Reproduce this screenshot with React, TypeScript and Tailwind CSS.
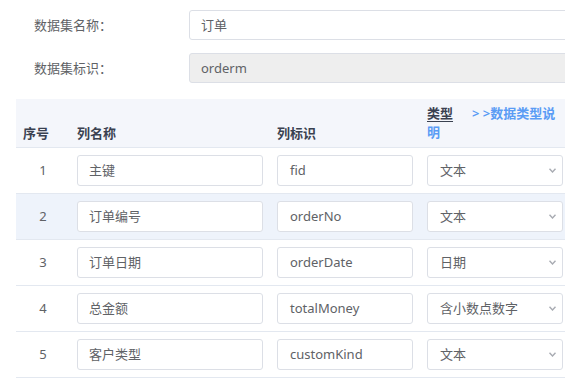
import React from 'react';

type Column = {
  name: string;
  key: string;
  type: string;
};

const columns: Column[] = [
  { name: '主键', key: 'fid', type: '文本' },
  { name: '订单编号', key: 'orderNo', type: '文本' },
  { name: '订单日期', key: 'orderDate', type: '日期' },
  { name: '总金额', key: 'totalMoney', type: '含小数点数字' },
  { name: '客户类型', key: 'customKind', type: '文本' },
];

const font = { fontFamily: '"Noto Sans", "Noto Sans CJK SC", sans-serif' };

function Chevron() {
  return (
    <svg width="7" height="5" viewBox="0 0 7 5" className="shrink-0">
      <path d="M0.5 0.8 L3.5 4 L6.5 0.8" fill="none" stroke="#a8abb2" strokeWidth="1.4" />
    </svg>
  );
}

export default function App() {
  return (
    <div className="w-[565px] h-[378px] overflow-hidden bg-white text-[13px] leading-[18px]" style={font}>
      {/* dataset form */}
      <div className="pt-[10px] flex flex-col gap-[13px]">
        <div className="flex items-center">
          <label className="w-[189px] shrink-0 pl-[34px] text-[#606266]">数据集名称：</label>
          <div className="w-[400px] h-[30px] border border-[#dcdfe6] rounded-[3px] flex items-center px-[11px] text-[#606266] shrink-0">
            订单
          </div>
        </div>
        <div className="flex items-center">
          <label className="w-[189px] shrink-0 pl-[34px] text-[#606266]">数据集标识：</label>
          <div className="w-[400px] h-[30px] border border-[#dcdfe6] rounded-[3px] bg-[#eeeeee] flex items-center px-[11px] text-[#606266] shrink-0">
            orderm
          </div>
        </div>
      </div>

      {/* columns table */}
      <div className="mt-[16px] ml-[16px]">
        <table className="table-fixed w-[554px]">
          <colgroup>
            <col className="w-[54px]" />
            <col className="w-[200px]" />
            <col className="w-[150px]" />
            <col className="w-[150px]" />
          </colgroup>
          <thead>
            <tr className="bg-[#f4f6fb] h-[48px] text-[#3a4150]">
              <th className="px-[7px] pb-[5px] align-bottom text-left border-b border-[#e3e8f0] font-semibold">序号</th>
              <th className="px-[7px] pb-[5px] align-bottom text-left border-b border-[#e3e8f0] font-semibold">列名称</th>
              <th className="px-[7px] pb-[5px] align-bottom text-left border-b border-[#e3e8f0] font-semibold">列标识</th>
              <th className="px-[7px] pb-[5px] align-bottom text-left border-b border-[#e3e8f0] font-semibold">
                <div className="w-[136px] leading-[19px]">
                  <span className="underline underline-offset-[3px]">类型</span>
                  <span className="ml-[19px] text-[#5a9cf5]">&gt; &gt;数据类型说明</span>
                </div>
              </th>
            </tr>
          </thead>
          <tbody>
            {columns.map((c, i) => (
              <tr key={c.key} className={i === 1 ? 'bg-[#eef3fb]' : 'bg-white'}>
                <td className="h-[46px] py-[7px] text-center text-[#606266] border-b border-[#e3e8f0]">{i + 1}</td>
                <td className="px-[7px] py-[7px] border-b border-[#e3e8f0]">
                  <div className="h-[31px] bg-white border border-[#dcdfe6] rounded-[3px] flex items-center px-[11px] text-[#606266]">
                    {c.name}
                  </div>
                </td>
                <td className="px-[7px] py-[7px] border-b border-[#e3e8f0]">
                  <div className="h-[31px] bg-white border border-[#dcdfe6] rounded-[3px] flex items-center px-[12px] text-[#606266]">
                    {c.key}
                  </div>
                </td>
                <td className="px-[7px] py-[7px] border-b border-[#e3e8f0]">
                  <div className="h-[31px] bg-white border border-[#dcdfe6] rounded-[3px] flex items-center justify-between pl-[12px] pr-[6px] text-[#606266]">
                    <span>{c.type}</span>
                    <Chevron />
                  </div>
                </td>
              </tr>
            ))}
          </tbody>
        </table>
      </div>
    </div>
  );
}
